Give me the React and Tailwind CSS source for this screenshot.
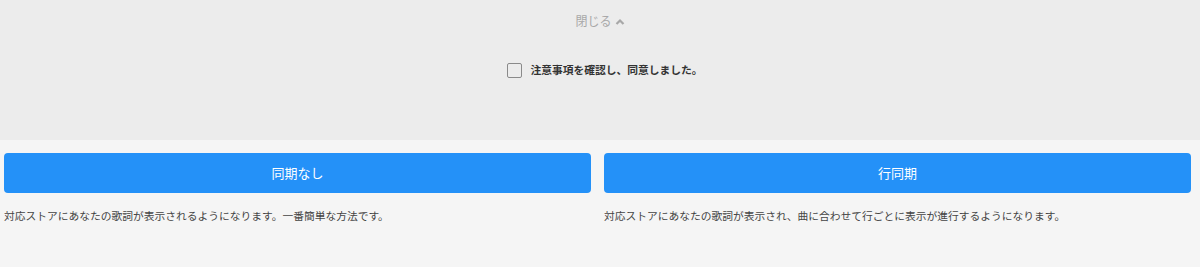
import React, { useState } from "react";

const options = [
  {
    label: "同期なし",
    desc: "対応ストアにあなたの歌詞が表示されるようになります。一番簡単な方法です。",
  },
  {
    label: "行同期",
    desc: "対応ストアにあなたの歌詞が表示され、曲に合わせて行ごとに表示が進行するようになります。",
  },
];

const App = () => {
  const [agreed, setAgreed] = useState(false);

  return (
    <div
      className="w-full min-h-[267px] bg-[#f5f5f5]"
      style={{ fontFamily: '"Noto Sans CJK JP", "Noto Sans", sans-serif' }}
    >
      <div className="h-[140px] bg-[#ececec] flex flex-col items-center">
        <button className="mt-[12px] flex items-center gap-[3px] text-[12px] leading-[18px] text-[#a8a8a8]">
          閉じる
          <svg width="10" height="10" viewBox="0 0 10 10" className="mt-[1px]">
            <polyline
              points="1.5,7 5,3.5 8.5,7"
              fill="none"
              stroke="#a8a8a8"
              strokeWidth="2.2"
            />
          </svg>
        </button>
        <label className="mt-[32px] ml-[10px] flex items-center gap-[8px] cursor-pointer">
          <span
            onClick={() => setAgreed(!agreed)}
            className={`w-[15px] h-[15px] border border-[#8a8a8a] rounded-[2px] bg-transparent flex items-center justify-center ${
              agreed ? "bg-[#2491f8] border-[#2491f8]" : ""
            }`}
          />
          <span className="text-[10.75px] leading-[16px] font-bold text-[#333]">
            注意事項を確認し、同意しました。
          </span>
        </label>
      </div>
      <div className="flex gap-[13px] pl-[4px] pr-[9px] pt-[13px]">
        {options.map((o) => (
          <div key={o.label} className="flex-1">
            <button className="w-full h-[40px] rounded-[4px] bg-[#2491f8] text-white text-[13px]">
              {o.label}
            </button>
            <p className="mt-[15px] text-[10.75px] leading-[16px] text-[#444]">
              {o.desc}
            </p>
          </div>
        ))}
      </div>
    </div>
  );
};

export default App;
